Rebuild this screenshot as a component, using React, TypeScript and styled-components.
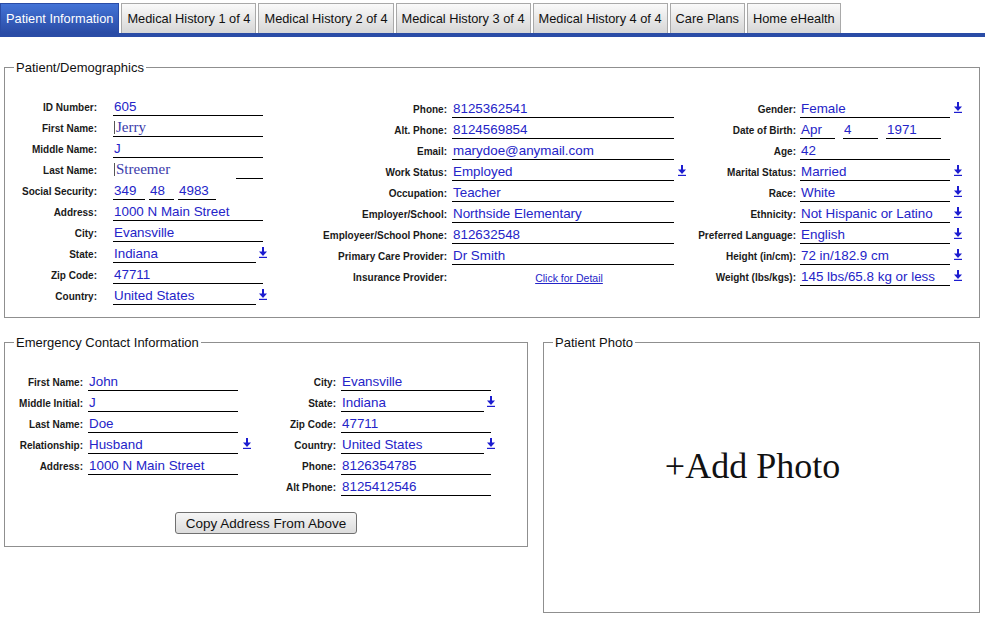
import styled, { createGlobalStyle } from "styled-components";

const GlobalStyle = createGlobalStyle`
  body {
    margin: 0;
    background: #fff;
    font-family: "Liberation Sans", Arial, sans-serif;
    color: #111;
  }
`;

const BLUE = "#2424c8";

const Page = styled.div`
  width: 990px;
`;

const TabBar = styled.div`
  display: flex;
  gap: 2px;
  width: 985px;
  padding-top: 3px;
  border-bottom: 4px solid #2a4ca6;
`;

const Tab = styled.div<{ $active?: boolean }>`
  height: 30px;
  box-sizing: border-box;
  display: flex;
  align-items: center;
  padding: 0 5px;
  font-size: 12.8px;
  border: 1px solid ${(p) => (p.$active ? "#2a4ca6" : "#a9a9a9")};
  border-bottom: none;
  color: ${(p) => (p.$active ? "#fff" : "#111")};
  background: ${(p) =>
    p.$active
      ? "linear-gradient(#4373d6, #2a4ca6)"
      : "linear-gradient(#fafafa, #d6d6d6)"};
  white-space: nowrap;
`;

const Fieldset = styled.fieldset<{ $w: number; $h?: number; $pt: number; $pb?: number }>`
  box-sizing: border-box;
  width: ${(p) => p.$w}px;
  ${(p) => (p.$h ? `height: ${p.$h}px;` : "")}
  margin: 0;
  border: 1px solid #8f8f8f;
  padding: ${(p) => p.$pt}px 0 ${(p) => p.$pb ?? 0}px 0;
  min-width: 0;
`;

const Legend = styled.legend`
  margin-left: 9px;
  padding: 0 2px;
  font-size: 13px;
  line-height: 15px;
  color: #111;
`;

const Demographics = styled(Fieldset)`
  margin: 23px 0 0 4px;
`;

const DemoGrid = styled.div`
  display: grid;
  grid-template-columns: 312px 379px auto;
`;

const Bottom = styled.div`
  display: flex;
  align-items: flex-start;
  margin: 17px 0 0 4px;
  gap: 15px;
`;

const EmergencyGrid = styled.div`
  display: grid;
  grid-template-columns: 281px auto;
`;

const Column = styled.div<{ $offset?: number }>`
  display: flex;
  flex-direction: column;
  padding-top: ${(p) => p.$offset ?? 0}px;
`;

const Row = styled.div`
  display: flex;
  align-items: flex-end;
  height: 21px;
`;

const Label = styled.div<{ $w: number; $gap: number }>`
  width: ${(p) => p.$w}px;
  margin-right: ${(p) => p.$gap}px;
  flex-shrink: 0;
  text-align: right;
  font-size: 10px;
  font-weight: bold;
  line-height: 12px;
  padding-bottom: 2px;
  white-space: nowrap;
  color: #1a1a1a;
`;

const Value = styled.div<{ $w: number; $line?: boolean; $mr?: number; $serif?: boolean }>`
  width: ${(p) => p.$w}px;
  height: 20px;
  box-sizing: border-box;
  flex-shrink: 0;
  margin-right: ${(p) => p.$mr ?? 0}px;
  display: flex;
  align-items: flex-end;
  padding: 0 0 1px 1px;
  border-bottom: 1px solid ${(p) => (p.$line === false ? "transparent" : "#000")};
  color: ${(p) => (p.$serif ? "#3a3aaa" : BLUE)};
  font-family: ${(p) =>
    p.$serif ? `"Liberation Serif", "Times New Roman", serif` : `"Liberation Sans", Arial, sans-serif`};
  font-size: ${(p) => (p.$serif ? 15 : 13.4)}px;
  line-height: 15px;
  white-space: nowrap;
  overflow: hidden;
`;

const Caret = styled.span`
  display: inline-block;
  width: 1px;
  height: 13px;
  margin: 0 1px 1px 0;
  background: #555;
`;

const LinkCell = styled.div<{ $w: number }>`
  width: ${(p) => p.$w}px;
  text-align: center;
  padding: 0 0 2px 12px;
  box-sizing: border-box;
  font-size: 10.5px;
  line-height: 12px;
  color: ${BLUE};
  text-decoration: underline;
`;

const ArrowBox = styled.div<{ $ml: number }>`
  margin: 0 0 5px ${(p) => p.$ml}px;
  display: flex;
`;

const Arrow = ({ ml }: { ml: number }) => (
  <ArrowBox $ml={ml}>
    <svg width="8" height="11" viewBox="0 0 8 11">
      <path d="M4 0v6" stroke="#1c1cd0" strokeWidth="2" />
      <path d="M0 4.5h8L4 9z" fill="#1c1cd0" />
      <path d="M0 10.4h8" stroke="#1c1cd0" strokeWidth="1.2" />
    </svg>
  </ArrowBox>
);

const Actions = styled.div`
  display: flex;
  justify-content: center;
  margin-top: 16px;
`;

const Button = styled.button`
  height: 22px;
  padding: 0 10px;
  font-family: "Liberation Sans", Arial, sans-serif;
  font-size: 13.5px;
  color: #111;
  border: 1px solid #707070;
  border-radius: 3px;
  background: linear-gradient(#f6f6f6, #dcdcdc);
`;

const PhotoArea = styled.div`
  height: 100%;
  display: flex;
  align-items: center;
  justify-content: center;
  padding: 0 18px 30px 0;
  box-sizing: border-box;
  font-family: "Liberation Serif", "Times New Roman", serif;
  font-size: 36px;
  color: #111;
`;

type Part = { v: string; w: number; mr?: number };
type Item = {
  label: string;
  value?: string;
  parts?: Part[];
  arrow?: boolean;
  serif?: boolean;
  suffix?: boolean;
  link?: string;
};

type ColSpec = { lw: number; gap: number; fw: number; short: number; ml: number; offset?: number };

const Fields = ({ items, spec }: { items: Item[]; spec: ColSpec }) => (
  <Column $offset={spec.offset}>
    {items.map((it) => (
      <Row key={it.label}>
        <Label $w={spec.lw} $gap={spec.gap}>
          {it.label}
        </Label>
        {it.link ? (
          <LinkCell $w={spec.fw}>{it.link}</LinkCell>
        ) : it.parts ? (
          it.parts.map((p) => (
            <Value key={p.v} $w={p.w} $mr={p.mr}>
              {p.v}
            </Value>
          ))
        ) : it.suffix ? (
          <>
            <Value $w={spec.fw - 27} $line={false} $serif>
              <Caret />
              {it.value}
            </Value>
            <Value $w={27} />
          </>
        ) : (
          <Value $w={it.arrow ? spec.fw - spec.short : spec.fw} $serif={it.serif}>
            {it.serif && <Caret />}
            {it.value}
          </Value>
        )}
        {it.arrow && <Arrow ml={spec.ml} />}
      </Row>
    ))}
  </Column>
);

const tabs = [
  "Patient Information",
  "Medical History 1 of 4",
  "Medical History 2 of 4",
  "Medical History 3 of 4",
  "Medical History 4 of 4",
  "Care Plans",
  "Home eHealth",
];

const demoLeft: Item[] = [
  { label: "ID Number:", value: "605" },
  { label: "First Name:", value: "Jerry", serif: true },
  { label: "Middle Name:", value: "J" },
  { label: "Last Name:", value: "Streemer", suffix: true },
  {
    label: "Social Security:",
    parts: [
      { v: "349", w: 32, mr: 4 },
      { v: "48", w: 25, mr: 4 },
      { v: "4983", w: 38 },
    ],
  },
  { label: "Address:", value: "1000 N Main Street" },
  { label: "City:", value: "Evansville" },
  { label: "State:", value: "Indiana", arrow: true },
  { label: "Zip Code:", value: "47711" },
  { label: "Country:", value: "United States", arrow: true },
];

const demoMid: Item[] = [
  { label: "Phone:", value: "8125362541" },
  { label: "Alt. Phone:", value: "8124569854" },
  { label: "Email:", value: "marydoe@anymail.com" },
  { label: "Work Status:", value: "Employed", arrow: true },
  { label: "Occupation:", value: "Teacher" },
  { label: "Employer/School:", value: "Northside Elementary" },
  { label: "Employeer/School Phone:", value: "812632548" },
  { label: "Primary Care Provider:", value: "Dr Smith" },
  { label: "Insurance Provider:", link: "Click for Detail" },
];

const demoRight: Item[] = [
  { label: "Gender:", value: "Female", arrow: true },
  {
    label: "Date of Birth:",
    parts: [
      { v: "Apr", w: 35, mr: 8 },
      { v: "4", w: 35, mr: 8 },
      { v: "1971", w: 55 },
    ],
  },
  { label: "Age:", value: "42" },
  { label: "Marital Status:", value: "Married", arrow: true },
  { label: "Race:", value: "White", arrow: true },
  { label: "Ethnicity:", value: "Not Hispanic or Latino", arrow: true },
  { label: "Preferred Language:", value: "English", arrow: true },
  { label: "Height (in/cm):", value: "72 in/182.9 cm", arrow: true },
  { label: "Weight (lbs/kgs):", value: "145 lbs/65.8 kg or less", arrow: true },
];

const emLeft: Item[] = [
  { label: "First Name:", value: "John" },
  { label: "Middle Initial:", value: "J" },
  { label: "Last Name:", value: "Doe" },
  { label: "Relationship:", value: "Husband", arrow: true },
  { label: "Address:", value: "1000 N Main Street" },
];

const emRight: Item[] = [
  { label: "City:", value: "Evansville" },
  { label: "State:", value: "Indiana", arrow: true },
  { label: "Zip Code:", value: "47711" },
  { label: "Country:", value: "United States", arrow: true },
  { label: "Phone:", value: "8126354785" },
  { label: "Alt Phone:", value: "8125412546" },
];

export default function App() {
  return (
    <Page>
      <GlobalStyle />
      <TabBar>
        {tabs.map((t, i) => (
          <Tab key={t} $active={i === 0}>
            {t}
          </Tab>
        ))}
      </TabBar>

      <Demographics $w={976} $pt={20} $pb={12}>
        <Legend>Patient/Demographics</Legend>
        <DemoGrid>
          <Fields items={demoLeft} spec={{ lw: 92, gap: 16, fw: 150, short: 7, ml: 3 }} />
          <Fields items={demoMid} spec={{ lw: 130, gap: 5, fw: 222, short: 0, ml: 4, offset: 2 }} />
          <Fields items={demoRight} spec={{ lw: 100, gap: 4, fw: 150, short: 0, ml: 4, offset: 2 }} />
        </DemoGrid>
      </Demographics>

      <Bottom>
        <Fieldset $w={524} $pt={20} $pb={12}>
          <Legend>Emergency Contact Information</Legend>
          <EmergencyGrid>
            <Fields items={emLeft} spec={{ lw: 78, gap: 5, fw: 150, short: 0, ml: 5 }} />
            <Fields items={emRight} spec={{ lw: 50, gap: 5, fw: 150, short: 7, ml: 3 }} />
          </EmergencyGrid>
          <Actions>
            <Button>Copy Address From Above</Button>
          </Actions>
        </Fieldset>
        <Fieldset $w={437} $h={278} $pt={0}>
          <Legend>Patient Photo</Legend>
          <PhotoArea>+Add Photo</PhotoArea>
        </Fieldset>
      </Bottom>
    </Page>
  );
}
